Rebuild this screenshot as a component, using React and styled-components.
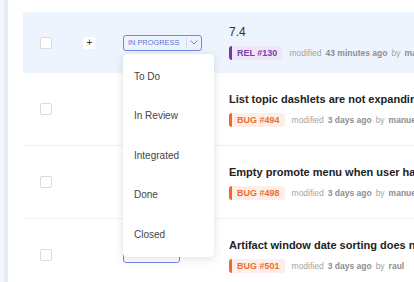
import React from "react";
import styled, { createGlobalStyle } from "styled-components";

const Global = createGlobalStyle`
  html, body { margin: 0; padding: 0; background: #fff; }
  body { font-family: "Liberation Sans", Arial, sans-serif; overflow: hidden; }
  * { box-sizing: border-box; }
`;

const Page = styled.div`
  display: flex;
  width: 414px;
  height: 282px;
  overflow: hidden;
`;

const Sidebar = styled.div`
  flex: 0 0 8px;
  background: #f5f6f9;
  border-right: 4px solid #e8ecf5;
`;

const Main = styled.div`
  flex: 1;
  padding: 12px 0 0 15px;
  min-width: 0;
`;

const List = styled.div`
  width: 560px;
`;

const Row = styled.div`
  display: grid;
  grid-template-columns: 43px 40px 106px 1fr;
  align-items: center;
  height: ${(p) => p.$h}px;
  padding-left: 17px;
  background: ${(p) => (p.$active ? "#eef4fd" : "#fff")};
  border-top: ${(p) => (p.$divider ? "1px solid #f0f1f3" : "none")};
  position: relative;
  z-index: ${(p) => (p.$active ? 2 : 1)};
`;

const Checkbox = styled.span`
  display: block;
  width: 12px;
  height: 12px;
  background: #fff;
  border: 1px solid #dadbde;
  border-radius: 2px;
`;

const PlusButton = styled.span`
  display: flex;
  align-items: center;
  justify-content: center;
  width: 13px;
  height: 12px;
  background: #fff;
  border-radius: 2px;
  font-size: 10px;
  color: #333;
  line-height: 1;
`;

const StatusCell = styled.div`
  position: relative;
  display: flex;
  align-items: center;
  height: 16px;
`;

const StatusButton = styled.div`
  display: flex;
  align-items: stretch;
  height: 16px;
  border: 1px solid #7487e0;
  border-radius: 3px;
  color: #5d71d8;
  font-size: 7.4px;
  font-weight: 500;
  line-height: 1;
  text-transform: uppercase;
`;

const StatusLabel = styled.span`
  display: flex;
  align-items: center;
  padding: 0 ${(p) => (p.$caret ? 7 : 4)}px 0 4px;
`;

const Caret = styled.span`
  display: flex;
  align-items: center;
  justify-content: center;
  width: 15px;
  position: relative;
  &::before {
    content: "";
    position: absolute;
    left: 0;
    top: 2px;
    bottom: 2px;
    width: 1px;
    background: #d6dbef;
  }
`;

const Menu = styled.div`
  position: absolute;
  left: 0;
  top: 19px;
  width: 91px;
  padding: 3px 0;
  background: #fff;
  border-radius: 4px;
  box-shadow: 0 2px 10px rgba(30, 40, 60, 0.13), 0 0 1px rgba(30, 40, 60, 0.12);
  z-index: 10;
`;

const MenuItem = styled.div`
  height: 39.5px;
  display: flex;
  align-items: center;
  padding-left: 11px;
  font-size: 10px;
  color: #444;
`;

const Content = styled.div`
  display: flex;
  flex-direction: column;
  gap: 7px;
  white-space: nowrap;
`;

const Title = styled.div`
  height: 14px;
  line-height: 14px;
  font-size: ${(p) => (p.$plain ? 12 : 11)}px;
  font-weight: ${(p) => (p.$plain ? 400 : 700)};
  color: ${(p) => (p.$plain ? "#333" : "#222")};
`;

const MetaLine = styled.div`
  display: flex;
  align-items: center;
  gap: 7px;
`;

const Tag = styled.span`
  display: inline-flex;
  align-items: center;
  height: 14px;
  padding: 0 5px;
  border-left: 3px solid ${(p) => p.$bar};
  border-radius: 3px;
  background: ${(p) => p.$bg};
  color: ${(p) => p.$fg};
  font-size: 9px;
  font-weight: 700;
`;

const Meta = styled.span`
  display: flex;
  gap: 4px;
  font-size: 8.5px;
  color: #a3a3a3;
`;

const Strong = styled.b`
  font-weight: 700;
  color: #8e8e8e;
`;

const kinds = {
  REL: { bar: "#7b36a6", bg: "#efe7f7", fg: "#7b3dad" },
  BUG: { bar: "#f1682a", bg: "#fdefe7", fg: "#f06d2e" },
};

const rows = [
  { title: "7.4", plain: true, kind: "REL", num: 130, when: "43 minutes ago", who: "manuel", status: "In Progress", active: true },
  { title: "List topic dashlets are not expanding to full width", kind: "BUG", num: 494, when: "3 days ago", who: "manuel", status: "To Do" },
  { title: "Empty promote menu when user has no permissions", kind: "BUG", num: 498, when: "3 days ago", who: "manuel", status: "To Do" },
  { title: "Artifact window date sorting does not work", kind: "BUG", num: 501, when: "3 days ago", who: "raul", status: "Integrated" },
];

const options = ["To Do", "In Review", "Integrated", "Done", "Closed"];

function ChevronDown() {
  return (
    <svg width="8" height="5" viewBox="0 0 8 5" fill="none">
      <polyline points="0.5,0.5 4,4 7.5,0.5" stroke="#7487e0" strokeWidth="1" />
    </svg>
  );
}

export default function App() {
  return (
    <>
      <Global />
      <Page>
        <Sidebar />
        <Main>
          <List>
            {rows.map((r, i) => {
              const k = kinds[r.kind];
              return (
                <Row key={r.num} $h={i === 0 ? 61 : i === 1 ? 72 : 73} $active={r.active} $divider={i > 1}>
                  <Checkbox />
                  <div>{r.active && <PlusButton>+</PlusButton>}</div>
                  <StatusCell>
                    <StatusButton>
                      <StatusLabel $caret={r.active}>{r.status}</StatusLabel>
                      {r.active && (
                        <Caret>
                          <ChevronDown />
                        </Caret>
                      )}
                    </StatusButton>
                    {r.active && (
                      <Menu>
                        {options.map((o) => (
                          <MenuItem key={o}>{o}</MenuItem>
                        ))}
                      </Menu>
                    )}
                  </StatusCell>
                  <Content>
                    <Title $plain={r.plain}>{r.title}</Title>
                    <MetaLine>
                      <Tag $bar={k.bar} $bg={k.bg} $fg={k.fg}>
                        {r.kind} #{r.num}
                      </Tag>
                      <Meta>
                        modified <Strong>{r.when}</Strong> by <Strong>{r.who}</Strong>
                      </Meta>
                    </MetaLine>
                  </Content>
                </Row>
              );
            })}
          </List>
        </Main>
      </Page>
    </>
  );
}
